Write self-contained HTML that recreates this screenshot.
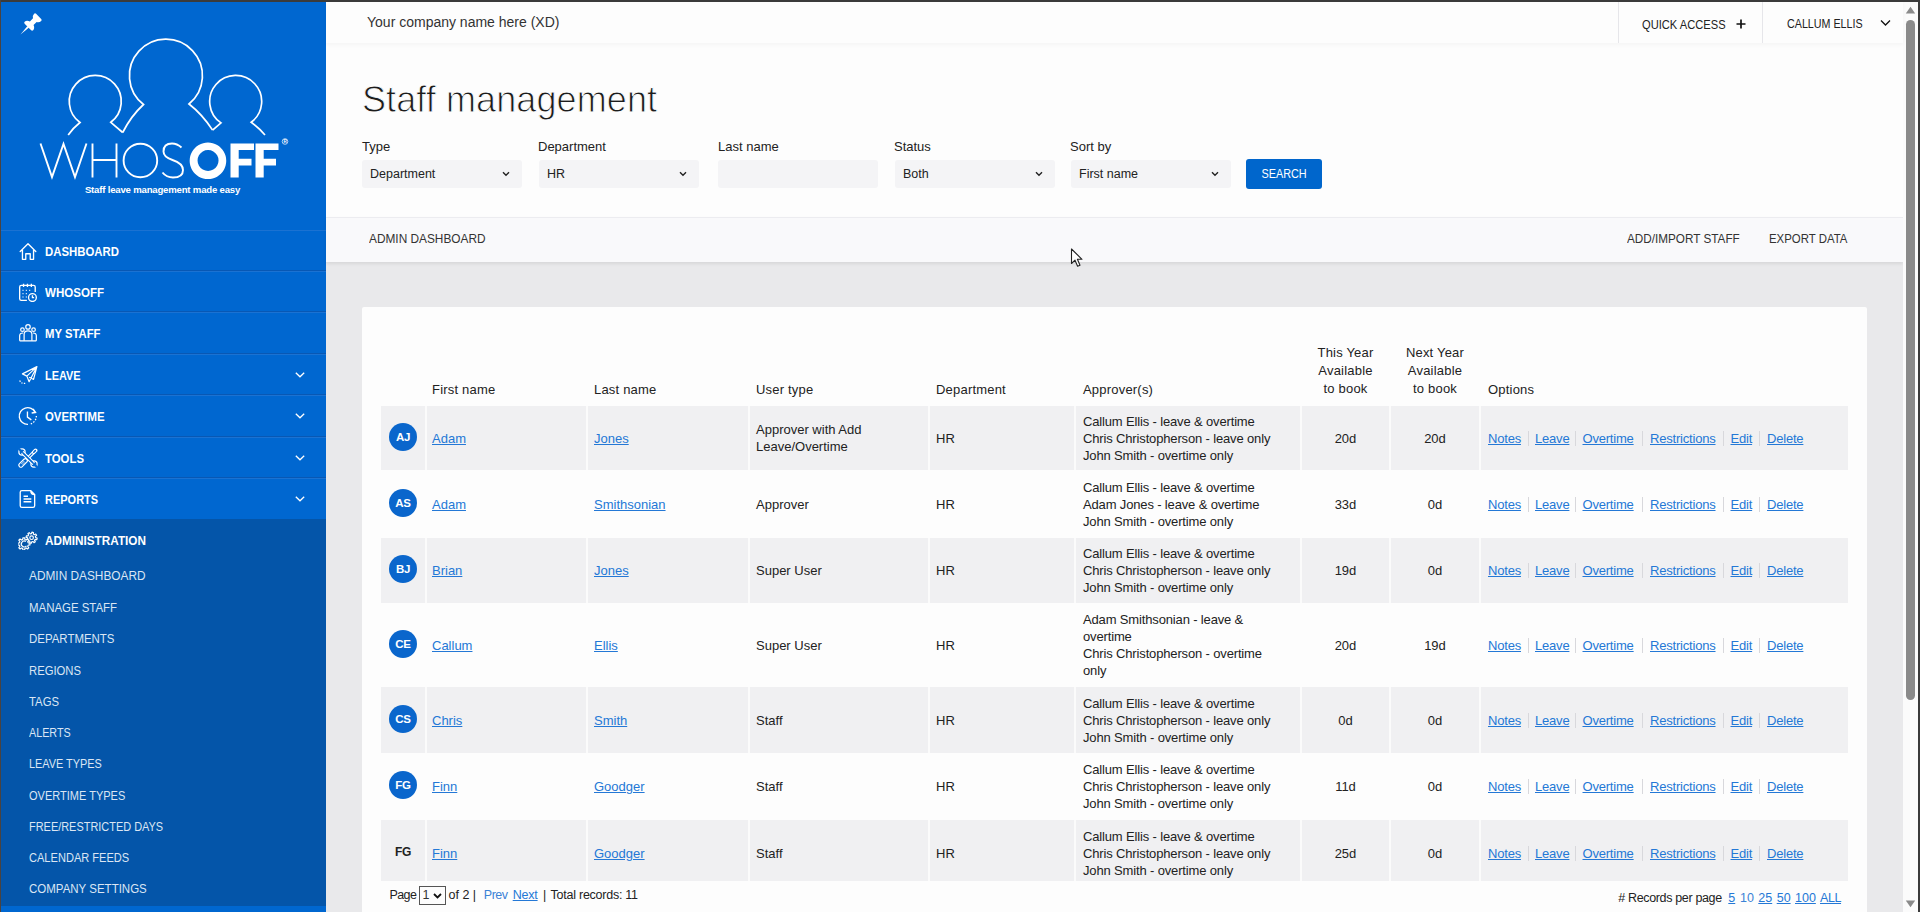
<!DOCTYPE html>
<html><head><meta charset="utf-8">
<style>
*{box-sizing:border-box;margin:0;padding:0}
html,body{width:1920px;height:912px;overflow:hidden;background:#e9e9eb;font-family:"Liberation Sans",sans-serif;position:relative}
.abs{position:absolute}
/* sidebar */
#side{position:absolute;left:0;top:0;width:326px;height:912px;background:#0067d0}
.nav{position:absolute;left:0;width:326px;height:42px;box-shadow:inset 0 1px 0 #1b72d2, 0 -1px 0 #0858b4}
.nav .t{position:absolute;display:inline-block;transform-origin:0 0;white-space:nowrap;left:45px;top:14px;color:#fff;font-weight:bold;font-size:13px}
.nav svg.ic{position:absolute;left:18px;top:10.5px}
.nav svg.ch{position:absolute;left:293.5px;top:17px}
#admin{position:absolute;left:0;top:519px;width:326px;height:387px;background:#0455a9}
.sub{position:absolute;transform-origin:0 0;white-space:nowrap;left:29px;color:#dbe6f4;font-size:12.5px}
/* main */
#top{position:absolute;left:326px;top:0;width:1577px;height:43px;background:#fdfdfd;box-shadow:0 2px 4px rgba(0,0,0,0.035);z-index:2}
#hdr{position:absolute;left:326px;top:43px;width:1577px;height:174px;background:#fdfdfd}
#tool{position:absolute;left:326px;top:217px;width:1577px;height:45px;background:#f9f9fb;border-top:1px solid #ececf0;box-shadow:0 2px 3px rgba(0,0,0,0.08)}
.lbl{position:absolute;top:139px;font-size:13px;color:#222}
.sel{position:absolute;top:160px;height:28px;width:160px;background:#f4f4f6;border-radius:3px;font-size:12.5px;color:#222;padding:7px 0 0 8px}
.sel svg{position:absolute;left:140px;top:11px}
#btn{position:absolute;left:1246px;top:159px;width:76px;height:30px;background:#0066cc;border-radius:3px;color:#fff;font-size:12.5px;text-align:center;padding-top:8px}
.tl{position:absolute;top:231px;font-size:13px;color:#333;transform-origin:0 0;white-space:nowrap}
#card{position:absolute;left:362px;top:307px;width:1505px;height:620px;background:#fdfdfd;border-radius:2px}

.th{position:absolute;font-size:13px;color:#222;line-height:17px;letter-spacing:0.2px;white-space:nowrap}
.c{text-align:center}
.row{position:absolute;left:381px;width:1467px;background:#fdfdfd}
.row.g{background:#f0f0f2}
.row i{position:absolute;top:0;width:2px;height:100%;background:#fbfbfb}
.cl{position:absolute;top:0;height:100%;display:flex;flex-direction:column;justify-content:center;font-size:13px;color:#222;line-height:17px;white-space:nowrap}
.cl.c{align-items:center}
.ap{letter-spacing:-0.15px}
a{color:#2478d6;text-decoration:underline}
.op{flex-direction:row;align-items:center;letter-spacing:-0.2px}
.op b{position:absolute;top:50%;margin-top:-7.5px;width:1px;height:15px;background:#d8d8dc}
.op a{position:absolute;top:50%;margin-top:-8.5px}
.av{position:absolute;left:8px;width:28px;height:28px;border-radius:50%;background:#0a66cc;color:#fff;font-weight:bold;font-size:11.5px;text-align:center;line-height:28px;letter-spacing:-0.3px}
.av.n{background:none;color:#222;font-size:12px}
.pg{position:absolute;font-size:12.5px;color:#222;white-space:nowrap}
.ps{position:absolute;width:27px;height:19px;border:1px solid #555;padding-left:3px;line-height:17px;font-size:12.5px;color:#333}
.ps svg{position:absolute;right:3px;top:6px}
/* scrollbar */
#sb{position:absolute;left:1903px;top:0;width:15px;height:912px;background:#fbfbfb}
</style></head><body>
 <div id="side">
  <svg class="abs" style="left:0;top:0" width="50" height="40" viewBox="0 0 50 40"><g transform="translate(37.8,17.2) rotate(45)" fill="#fff"><path d="M-5 0.2 Q-5 -1.2 -3.6 -1.2 H3.6 Q5 -1.2 5 0.2 Q5 2.8 2.6 4.2 V8.6 Q6 10 6 12.6 Q6 14 4.6 14 H-4.6 Q-6 14 -6 12.6 Q-6 10 -2.6 8.6 V4.2 Q-5 2.8 -5 0.2 Z"/><path d="M-1.1 13.5 L0 24.5 L1.1 13.5 Z"/></g></svg>
  <svg class="abs" style="left:0;top:0" width="326" height="200" viewBox="0 0 326 200">
   <g fill="none" stroke="#fff" stroke-width="1.7" stroke-linejoin="miter">
    <path d="M122.7 132.5 Q131 116 143.5 104.5 A36.5 36.5 0 1 1 189 104 Q202 114 212.6 130.1"/>
    <path d="M68.2 135 Q73 128 80 122.5 A26 26 0 1 1 110.8 122.3 L122.7 132.5"/>
    <path d="M212.6 130.1 L221 122.9 A26 26 0 1 1 251.2 122.3 Q259 128 265 135"/>
   </g>
   <g fill="none" stroke="#fff" stroke-width="1.9">
    <path d="M40.5 143.5 L52 177 L63.5 144 L75 177 L86.5 143.5"/>
    <path d="M92.5 143.5 V177.5 M116.5 143.5 V177.5 M92.5 160 H116.5"/>
    <ellipse cx="140.4" cy="160.5" rx="16.8" ry="16.8"/>
    <path d="M181.5 147.5 Q177 143.5 172 143.5 Q163.5 143.5 163.5 151.5 Q163.5 157 172.5 160 Q183 163.5 183 170 Q183 177.5 173 177.5 Q166.5 177.5 162.5 172.5"/>
   </g>
   <g fill="#fff">
    <path d="M208 142.5 A18.3 18.3 0 1 1 207.9 142.5 Z M208 150 A10.5 10.5 0 1 0 208.1 150 Z" fill-rule="evenodd"/>
    <path d="M230.5 143.5 H254 V150 H238.7 V158.8 H251.5 V165.5 H238.7 V177.5 H230.5 Z"/>
    <path d="M255.5 143.5 H278.5 V150 H263.7 V158.8 H276 V165.5 H263.7 V177.5 H255.5 Z"/>
    <circle cx="285" cy="141.5" r="2.8" fill="none" stroke="#fff" stroke-width="0.7"/><text x="285" y="143.3" fill="#fff" font-family="Liberation Sans" font-size="4.5" font-weight="bold" text-anchor="middle">R</text>
   </g>
   <text x="162.5" y="192.5" fill="#fff" font-family="Liberation Sans" font-weight="bold" font-size="9.6" text-anchor="middle" letter-spacing="-0.2">Staff leave management made easy</text>
  </svg>
  <div id="admin"></div>
<div class="nav" style="top:230px;box-shadow:inset 0 1px 0 #1b72d2"><svg class="ic" width="20" height="20" viewBox="0 0 18 18"><path d="M2 9.5 L9 2.5 L16 9.5 M4 8 V16.5 H7 V11.5 H11 V16.5 H14 V8" fill="none" stroke="#fff" stroke-width="1.2" stroke-linejoin="round" stroke-linecap="round"/></svg><span class="t" style="transform:scaleX(0.876)">DASHBOARD</span></div>
<div class="nav" style="top:271px"><svg class="ic" width="20" height="20" viewBox="0 0 18 18"><g fill="none" stroke="#fff" stroke-width="1.2"><path d="M8 16.5 H3 Q1.5 16.5 1.5 15 V4.5 Q1.5 3 3 3 H14 Q15.5 3 15.5 4.5 V9"/><path d="M5 1.5 V4.5 M8.5 1.5 V4.5 M12 1.5 V4.5"/><circle cx="13" cy="14" r="3.5"/><path d="M13 12 V14 H14.5"/></g><g fill="#fff"><rect x="4" y="7" width="1" height="1"/><rect x="7" y="7" width="1" height="1"/><rect x="10" y="7" width="1" height="1"/><rect x="4" y="10" width="1" height="1"/><rect x="7" y="10" width="1" height="1"/><rect x="4" y="13" width="1" height="1"/><rect x="7" y="13" width="1" height="1"/></g></svg><span class="t" style="transform:scaleX(0.889)">WHOSOFF</span></div>
<div class="nav" style="top:312px"><svg class="ic" width="20" height="20" viewBox="0 0 18 18"><g fill="none" stroke="#fff" stroke-width="1.1"><circle cx="9" cy="3.5" r="2"/><circle cx="4" cy="6" r="1.6"/><circle cx="14" cy="6" r="1.6"/><path d="M5.5 16 V10 Q5.5 7 9 7 Q12.5 7 12.5 10 V16"/><path d="M1.5 16 V11.5 Q1.5 9 4.5 9 M16.5 16 V11.5 Q16.5 9 13.5 9 M1.5 16 H16.5"/></g></svg><span class="t" style="transform:scaleX(0.87)">MY STAFF</span></div>
<div class="nav" style="top:354px"><svg class="ic" width="20" height="20" viewBox="0 0 18 18"><g fill="none" stroke="#fff" stroke-width="1.1" stroke-linejoin="round"><path d="M17 1.5 L4 8 L8 10 Z M17 1.5 L8 10 L10 15 Z M17 1.5 L14 13 L10 11"/><path d="M1.5 14 Q3 17 6.5 16.5" stroke-dasharray="1.2 1.2"/></g></svg><span class="t" style="transform:scaleX(0.84)">LEAVE</span><svg class="ch" width="12" height="8" viewBox="0 0 12 8"><path d="M1.8 1.8 L6 5.8 L10.2 1.8" fill="none" stroke="#fff" stroke-width="1.3"/></svg></div>
<div class="nav" style="top:395px"><svg class="ic" width="20" height="20" viewBox="0 0 18 18"><g fill="none" stroke="#fff" stroke-width="1.2"><path d="M15.5 6 A7.5 7.5 0 1 0 9 16.5" /><path d="M16.5 9 A7.5 7.5 0 0 1 11 16.3" stroke-dasharray="1.3 1.3"/><path d="M13.5 2.5 L15.8 5.8 L12.3 6.3"/><path d="M8.5 5 V10 L12 12.5"/></g></svg><span class="t" style="transform:scaleX(0.876)">OVERTIME</span><svg class="ch" width="12" height="8" viewBox="0 0 12 8"><path d="M1.8 1.8 L6 5.8 L10.2 1.8" fill="none" stroke="#fff" stroke-width="1.3"/></svg></div>
<div class="nav" style="top:437px"><svg class="ic" width="20" height="20" viewBox="0 0 18 18"><g fill="none" stroke-linecap="round" stroke-linejoin="round">
<path d="M8.5 9.5 L14.2 3.8" stroke="#fff" stroke-width="3"/><path d="M8.5 9.5 L14.2 3.8" stroke="#0067d0" stroke-width="1"/>
<path d="M14.2 3.8 L15.8 2.2" stroke="#fff" stroke-width="3.4"/><path d="M14.2 3.8 L15.6 2.4" stroke="#0067d0" stroke-width="1.4"/>
<path d="M2.6 15.4 L6.6 11.4" stroke="#fff" stroke-width="4.6"/><path d="M2.6 15.4 L6.6 11.4" stroke="#0067d0" stroke-width="2.6"/><path d="M3.2 14.2 L5.4 12 M4.2 15.2 L6.4 13" stroke="#fff" stroke-width="0.7"/>
<path d="M4.6 4.6 L13.4 13.4" stroke="#fff" stroke-width="3.4"/>
<circle cx="3.6" cy="3.6" r="2.8" stroke="#fff" stroke-width="1.1"/><circle cx="14.4" cy="14.4" r="2.8" stroke="#fff" stroke-width="1.1"/>
<path d="M4.6 4.6 L13.4 13.4" stroke="#0067d0" stroke-width="1.4"/>
<path d="M1.6 1.6 L3.6 3.6 M16.4 16.4 L14.4 14.4" stroke="#0067d0" stroke-width="2"/>
</g></svg><span class="t" style="transform:scaleX(0.876)">TOOLS</span><svg class="ch" width="12" height="8" viewBox="0 0 12 8"><path d="M1.8 1.8 L6 5.8 L10.2 1.8" fill="none" stroke="#fff" stroke-width="1.3"/></svg></div>
<div class="nav" style="top:478px"><svg class="ic" width="20" height="20" viewBox="0 0 18 18"><g fill="none" stroke="#fff" stroke-width="1.2"><path d="M11.5 1.5 H3.5 Q2 1.5 2 3 V15 Q2 16.5 3.5 16.5 H13.5 Q15 16.5 15 15 V5 Z M11.5 1.5 Q11.5 5 15 5"/><path d="M5 6.5 H9 M5 9 H12 M5 11.5 H12"/></g></svg><span class="t" style="transform:scaleX(0.845)">REPORTS</span><svg class="ch" width="12" height="8" viewBox="0 0 12 8"><path d="M1.8 1.8 L6 5.8 L10.2 1.8" fill="none" stroke="#fff" stroke-width="1.3"/></svg></div>
<div class="nav" style="top:519px;box-shadow:none"><svg class="ic" width="20" height="20" viewBox="0 0 18 18"><g fill="none" stroke="#fff" stroke-width="1.05" stroke-linejoin="round"><path d="M17.23 7.22 L16.95 8.60 L15.48 8.50 L14.91 9.34 L15.56 10.67 L14.39 11.45 L13.42 10.33 L12.42 10.53 L11.95 11.92 L10.57 11.64 L10.67 10.17 L9.83 9.60 L8.50 10.25 L7.72 9.08 L8.84 8.11 L8.64 7.11 L7.25 6.64 L7.53 5.26 L9.00 5.36 L9.57 4.52 L8.92 3.19 L10.09 2.41 L11.06 3.53 L12.06 3.33 L12.53 1.94 L13.91 2.22 L13.81 3.69 L14.65 4.26 L15.98 3.61 L16.76 4.78 L15.64 5.75 L15.84 6.75 Z"/><circle cx="12.24" cy="6.93" r="1.6"/><path d="M10.76 11.81 L10.76 13.39 L9.19 13.62 L8.75 14.69 L9.70 15.96 L8.58 17.08 L7.31 16.13 L6.24 16.57 L6.01 18.14 L4.43 18.14 L4.20 16.57 L3.13 16.13 L1.86 17.08 L0.74 15.96 L1.69 14.69 L1.25 13.62 L-0.32 13.39 L-0.32 11.81 L1.25 11.58 L1.69 10.51 L0.74 9.24 L1.86 8.12 L3.13 9.07 L4.20 8.63 L4.43 7.06 L6.01 7.06 L6.24 8.63 L7.31 9.07 L8.58 8.12 L9.70 9.24 L8.75 10.51 L9.19 11.58 Z" fill="#0455a9"/><path d="M7.02 10.40 A2.6 2.6 0 1 0 7.62 14.20"/></g></svg><span class="t" style="transform:scaleX(0.904)">ADMINISTRATION</span></div>
<div class="sub" style="top:569.0px;transform:scaleX(0.948)">ADMIN DASHBOARD</div>
<div class="sub" style="top:601.0px;transform:scaleX(0.914)">MANAGE STAFF</div>
<div class="sub" style="top:632.0px;transform:scaleX(0.916)">DEPARTMENTS</div>
<div class="sub" style="top:663.5px;transform:scaleX(0.901)">REGIONS</div>
<div class="sub" style="top:694.5px;transform:scaleX(0.906)">TAGS</div>
<div class="sub" style="top:726.0px;transform:scaleX(0.862)">ALERTS</div>
<div class="sub" style="top:757.0px;transform:scaleX(0.870)">LEAVE TYPES</div>
<div class="sub" style="top:788.5px;transform:scaleX(0.881)">OVERTIME TYPES</div>
<div class="sub" style="top:820.0px;transform:scaleX(0.875)">FREE/RESTRICTED DAYS</div>
<div class="sub" style="top:851.0px;transform:scaleX(0.885)">CALENDAR FEEDS</div>
<div class="sub" style="top:882.0px;transform:scaleX(0.920)">COMPANY SETTINGS</div>
 </div>
 <div id="top">
  <div class="abs" style="left:41px;top:14px;font-size:14px;color:#333">Your company name here (XD)</div>
  <div class="abs" style="left:1292px;top:0;width:1px;height:43px;background:#e6e6ea"></div>
  <div class="abs" style="left:1436px;top:0;width:1px;height:43px;background:#e6e6ea"></div>
  <div class="abs" style="left:1316px;top:17px;font-size:13px;color:#222;white-space:nowrap;transform-origin:0 0;transform:scaleX(0.857)">QUICK ACCESS</div>
  <svg class="abs" style="left:1410px;top:19px" width="10" height="10" viewBox="0 0 10 10"><path d="M5 0.5 V9.5 M0.5 5 H9.5" stroke="#111" stroke-width="1.7"/></svg>
  <div class="abs" style="left:1461px;top:16px;font-size:13px;color:#222;white-space:nowrap;transform-origin:0 0;transform:scaleX(0.824)">CALLUM ELLIS</div>
  <svg class="abs" style="left:1554px;top:19px" width="11" height="8" viewBox="0 0 11 8"><path d="M1 1.5 L5.5 6 L10 1.5" fill="none" stroke="#111" stroke-width="1.3"/></svg>
 </div>
 <div id="hdr"></div>
 <div class="abs" style="left:362px;top:79px;font-size:36px;color:#1c1c1c;white-space:nowrap;-webkit-text-stroke:0.9px #fdfdfd;letter-spacing:0.1px">Staff management</div>
 <div class="lbl" style="left:362px">Type</div>
 <div class="lbl" style="left:538px">Department</div>
 <div class="lbl" style="left:718px">Last name</div>
 <div class="lbl" style="left:894px">Status</div>
 <div class="lbl" style="left:1070px">Sort by</div>
 <div class="sel" style="left:362px">Department<svg width="8" height="6" viewBox="0 0 8 6"><path d="M1 1.2 L4 4.2 L7 1.2" fill="none" stroke="#222" stroke-width="1.4"/></svg></div>
 <div class="sel" style="left:539px">HR<svg width="8" height="6" viewBox="0 0 8 6"><path d="M1 1.2 L4 4.2 L7 1.2" fill="none" stroke="#222" stroke-width="1.4"/></svg></div>
 <div class="sel" style="left:718px"></div>
 <div class="sel" style="left:895px">Both<svg width="8" height="6" viewBox="0 0 8 6"><path d="M1 1.2 L4 4.2 L7 1.2" fill="none" stroke="#222" stroke-width="1.4"/></svg></div>
 <div class="sel" style="left:1071px">First name<svg width="8" height="6" viewBox="0 0 8 6"><path d="M1 1.2 L4 4.2 L7 1.2" fill="none" stroke="#222" stroke-width="1.4"/></svg></div>
 <div id="btn"><span style="display:inline-block;transform:scaleX(0.87)">SEARCH</span></div>
 <div id="tool"></div>
 <div class="tl" style="left:369px;transform:scaleX(0.912)">ADMIN DASHBOARD</div>
 <div class="tl" style="left:1627px;transform:scaleX(0.902)">ADD/IMPORT STAFF</div>
 <div class="tl" style="left:1769px;transform:scaleX(0.878)">EXPORT DATA</div>
 <div id="card"></div>
 <div class="th" style="left:432px;top:381px">First name</div>
 <div class="th" style="left:594px;top:381px">Last name</div>
 <div class="th" style="left:756px;top:381px">User type</div>
 <div class="th" style="left:936px;top:381px">Department</div>
 <div class="th" style="left:1083px;top:381px">Approver(s)</div>
 <div class="th c" style="left:1302px;width:87px;top:344px;line-height:18px">This Year<br>Available<br>to book</div>
 <div class="th c" style="left:1391px;width:88px;top:344px;line-height:18px">Next Year<br>Available<br>to book</div>
 <div class="th" style="left:1488px;top:381px">Options</div>
 <div class="row g" style="top:406px;height:64px"><i style="left:44px"></i><i style="left:205px"></i><i style="left:367px"></i><i style="left:547px"></i><i style="left:693px"></i><i style="left:919px"></i><i style="left:1008px"></i><i style="left:1098px"></i><div class="av" style="top:17px">AJ</div><div class="cl" style="left:51px"><a>Adam</a></div><div class="cl" style="left:213px"><a>Jones</a></div><div class="cl" style="left:375px">Approver with Add<br>Leave/Overtime</div><div class="cl" style="left:555px">HR</div><div class="cl ap" style="left:702px">Callum Ellis - leave &amp; overtime<br>Chris Christopherson - leave only<br>John Smith - overtime only</div><div class="cl c" style="left:921px;width:87px">20d</div><div class="cl c" style="left:1010px;width:88px">20d</div><div class="cl op" style="left:1107px"><a style="left:0">Notes</a><b style="left:40px"></b><a style="left:47px">Leave</a><b style="left:87px"></b><a style="left:94.5px">Overtime</a><b style="left:154px"></b><a style="left:162px">Restrictions</a><b style="left:235px"></b><a style="left:242.5px">Edit</a><b style="left:271px"></b><a style="left:279px">Delete</a></div></div>
 <div class="row" style="top:470px;height:68px"><div class="av" style="top:19px">AS</div><div class="cl" style="left:51px"><a>Adam</a></div><div class="cl" style="left:213px"><a>Smithsonian</a></div><div class="cl" style="left:375px">Approver</div><div class="cl" style="left:555px">HR</div><div class="cl ap" style="left:702px">Callum Ellis - leave &amp; overtime<br>Adam Jones - leave &amp; overtime<br>John Smith - overtime only</div><div class="cl c" style="left:921px;width:87px">33d</div><div class="cl c" style="left:1010px;width:88px">0d</div><div class="cl op" style="left:1107px"><a style="left:0">Notes</a><b style="left:40px"></b><a style="left:47px">Leave</a><b style="left:87px"></b><a style="left:94.5px">Overtime</a><b style="left:154px"></b><a style="left:162px">Restrictions</a><b style="left:235px"></b><a style="left:242.5px">Edit</a><b style="left:271px"></b><a style="left:279px">Delete</a></div></div>
 <div class="row g" style="top:538px;height:65px"><i style="left:44px"></i><i style="left:205px"></i><i style="left:367px"></i><i style="left:547px"></i><i style="left:693px"></i><i style="left:919px"></i><i style="left:1008px"></i><i style="left:1098px"></i><div class="av" style="top:17px">BJ</div><div class="cl" style="left:51px"><a>Brian</a></div><div class="cl" style="left:213px"><a>Jones</a></div><div class="cl" style="left:375px">Super User</div><div class="cl" style="left:555px">HR</div><div class="cl ap" style="left:702px">Callum Ellis - leave &amp; overtime<br>Chris Christopherson - leave only<br>John Smith - overtime only</div><div class="cl c" style="left:921px;width:87px">19d</div><div class="cl c" style="left:1010px;width:88px">0d</div><div class="cl op" style="left:1107px"><a style="left:0">Notes</a><b style="left:40px"></b><a style="left:47px">Leave</a><b style="left:87px"></b><a style="left:94.5px">Overtime</a><b style="left:154px"></b><a style="left:162px">Restrictions</a><b style="left:235px"></b><a style="left:242.5px">Edit</a><b style="left:271px"></b><a style="left:279px">Delete</a></div></div>
 <div class="row" style="top:603px;height:84px"><div class="av" style="top:27px">CE</div><div class="cl" style="left:51px"><a>Callum</a></div><div class="cl" style="left:213px"><a>Ellis</a></div><div class="cl" style="left:375px">Super User</div><div class="cl" style="left:555px">HR</div><div class="cl ap" style="left:702px">Adam Smithsonian - leave &amp;<br>overtime<br>Chris Christopherson - overtime<br>only</div><div class="cl c" style="left:921px;width:87px">20d</div><div class="cl c" style="left:1010px;width:88px">19d</div><div class="cl op" style="left:1107px"><a style="left:0">Notes</a><b style="left:40px"></b><a style="left:47px">Leave</a><b style="left:87px"></b><a style="left:94.5px">Overtime</a><b style="left:154px"></b><a style="left:162px">Restrictions</a><b style="left:235px"></b><a style="left:242.5px">Edit</a><b style="left:271px"></b><a style="left:279px">Delete</a></div></div>
 <div class="row g" style="top:687px;height:66px"><i style="left:44px"></i><i style="left:205px"></i><i style="left:367px"></i><i style="left:547px"></i><i style="left:693px"></i><i style="left:919px"></i><i style="left:1008px"></i><i style="left:1098px"></i><div class="av" style="top:18px">CS</div><div class="cl" style="left:51px"><a>Chris</a></div><div class="cl" style="left:213px"><a>Smith</a></div><div class="cl" style="left:375px">Staff</div><div class="cl" style="left:555px">HR</div><div class="cl ap" style="left:702px">Callum Ellis - leave &amp; overtime<br>Chris Christopherson - leave only<br>John Smith - overtime only</div><div class="cl c" style="left:921px;width:87px">0d</div><div class="cl c" style="left:1010px;width:88px">0d</div><div class="cl op" style="left:1107px"><a style="left:0">Notes</a><b style="left:40px"></b><a style="left:47px">Leave</a><b style="left:87px"></b><a style="left:94.5px">Overtime</a><b style="left:154px"></b><a style="left:162px">Restrictions</a><b style="left:235px"></b><a style="left:242.5px">Edit</a><b style="left:271px"></b><a style="left:279px">Delete</a></div></div>
 <div class="row" style="top:753px;height:67px"><div class="av" style="top:18px">FG</div><div class="cl" style="left:51px"><a>Finn</a></div><div class="cl" style="left:213px"><a>Goodger</a></div><div class="cl" style="left:375px">Staff</div><div class="cl" style="left:555px">HR</div><div class="cl ap" style="left:702px">Callum Ellis - leave &amp; overtime<br>Chris Christopherson - leave only<br>John Smith - overtime only</div><div class="cl c" style="left:921px;width:87px">11d</div><div class="cl c" style="left:1010px;width:88px">0d</div><div class="cl op" style="left:1107px"><a style="left:0">Notes</a><b style="left:40px"></b><a style="left:47px">Leave</a><b style="left:87px"></b><a style="left:94.5px">Overtime</a><b style="left:154px"></b><a style="left:162px">Restrictions</a><b style="left:235px"></b><a style="left:242.5px">Edit</a><b style="left:271px"></b><a style="left:279px">Delete</a></div></div>
 <div class="row g" style="top:820px;height:61px;overflow:hidden"><div style="position:absolute;left:0;top:0;width:100%;height:66px"><i style="left:44px"></i><i style="left:205px"></i><i style="left:367px"></i><i style="left:547px"></i><i style="left:693px"></i><i style="left:919px"></i><i style="left:1008px"></i><i style="left:1098px"></i><div class="av n" style="top:18px">FG</div><div class="cl" style="left:51px"><a>Finn</a></div><div class="cl" style="left:213px"><a>Goodger</a></div><div class="cl" style="left:375px">Staff</div><div class="cl" style="left:555px">HR</div><div class="cl ap" style="left:702px">Callum Ellis - leave &amp; overtime<br>Chris Christopherson - leave only<br>John Smith - overtime only</div><div class="cl c" style="left:921px;width:87px">25d</div><div class="cl c" style="left:1010px;width:88px">0d</div><div class="cl op" style="left:1107px"><a style="left:0">Notes</a><b style="left:40px"></b><a style="left:47px">Leave</a><b style="left:87px"></b><a style="left:94.5px">Overtime</a><b style="left:154px"></b><a style="left:162px">Restrictions</a><b style="left:235px"></b><a style="left:242.5px">Edit</a><b style="left:271px"></b><a style="left:279px">Delete</a></div></div></div>
 <div class="pg" style="left:389.5px;top:888px;letter-spacing:-0.6px">Page</div>
 <div class="ps" style="left:418.5px;top:886px">1<svg width="9" height="6" viewBox="0 0 9 6"><path d="M1 1 L4.5 4.5 L8 1" fill="none" stroke="#111" stroke-width="1.8"/></svg></div>
 <div class="pg" style="left:448.5px;top:888px">of 2 |</div>
 <div class="pg" style="left:483.8px;top:888px;color:#3b82d6;letter-spacing:-0.5px">Prev</div>
 <div class="pg" style="left:512.7px;top:888px;letter-spacing:-0.2px"><a>Next</a></div>
 <div class="pg" style="left:543px;top:888px">|</div>
 <div class="pg" style="left:550.6px;top:888px;letter-spacing:-0.25px">Total records: 11</div>
 <div class="pg" style="left:1618.3px;top:891px;letter-spacing:-0.35px"># Records per page</div>
 <div class="pg" style="left:1728.3px;top:891px"><a>5</a></div>
 <div class="pg" style="left:1740px;top:891px;color:#3b82d6">10</div>
 <div class="pg" style="left:1758.3px;top:891px"><a>25</a></div>
 <div class="pg" style="left:1776.7px;top:891px"><a>50</a></div>
 <div class="pg" style="left:1795px;top:891px"><a>100</a></div>
 <div class="pg" style="left:1820px;top:891px;letter-spacing:-0.4px"><a>ALL</a></div>
 <div id="sb"></div>
 <svg class="abs" style="left:1905px;top:6px" width="11" height="8" viewBox="0 0 11 8"><path d="M5.5 0.8 L10.2 7.6 H0.8 Z" fill="#8a8a8a"/></svg>
 <div class="abs" style="left:1906px;top:20px;width:9px;height:680px;border-radius:4.5px;background:#8a8a8a"></div>
 <svg class="abs" style="left:1905px;top:900px" width="11" height="8" viewBox="0 0 11 8"><path d="M0.8 0.4 H10.2 L5.5 7.2 Z" fill="#8a8a8a"/></svg>
 <svg class="abs" style="left:1070px;top:248px" width="15" height="20" viewBox="0 0 15 20"><path d="M1.5 1 V15.5 L5 12.2 L7.6 18.2 L10 17.2 L7.4 11.3 H12 Z" fill="#fff" stroke="#222" stroke-width="1.1" stroke-linejoin="round"/></svg>
 <div class="abs" style="left:0;top:0;width:1920px;height:2px;background:#3b3b3b;z-index:10"></div>
 <div class="abs" style="left:0;top:0;width:1px;height:912px;background:#4a4340;z-index:10"></div>
 <div class="abs" style="left:1918px;top:0;width:2px;height:912px;background:#3b3b3b;z-index:10"></div>
</body></html>
